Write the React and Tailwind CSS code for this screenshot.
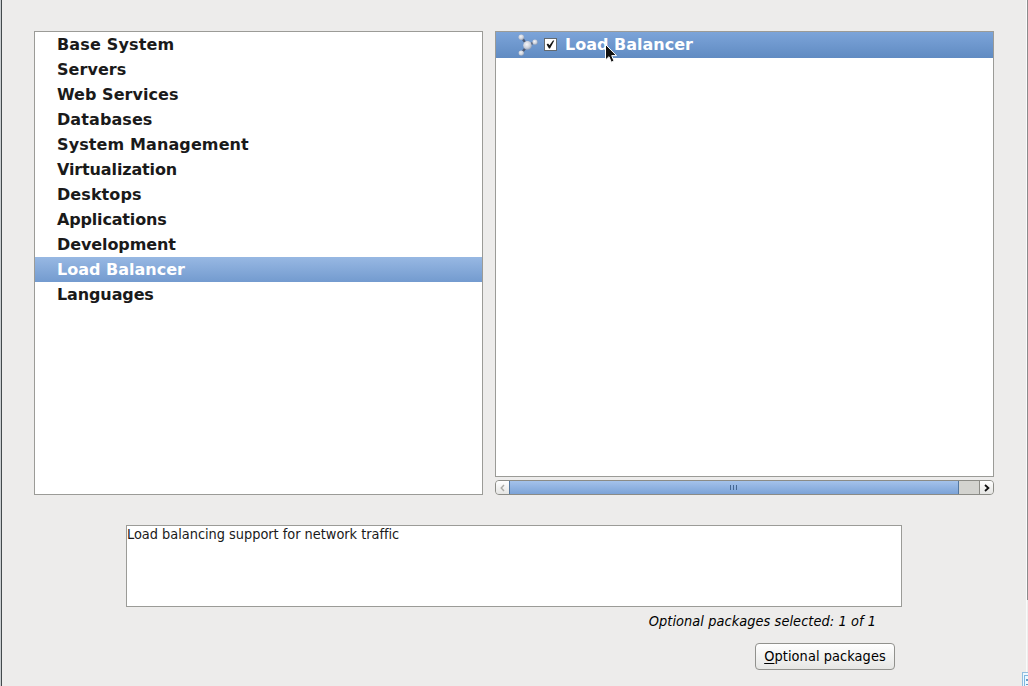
const categories = [
  ["Base System", "tracking-[0.17px]"],
  ["Servers", "tracking-[0.05px]"],
  ["Web Services", "tracking-[0.04px]"],
  ["Databases", "tracking-[0.09px]"],
  ["System Management", "tracking-[0.11px]"],
  ["Virtualization", "tracking-[-0.13px]"],
  ["Desktops", "tracking-[0.08px]"],
  ["Applications", "tracking-[-0.17px]"],
  ["Development", "tracking-[-0.1px]"],
  ["Load Balancer", "tracking-normal"],
  ["Languages", "tracking-[-0.12px]"],
];

function Category({ name, tracking, selected }) {
  return (
    <li className={`h-[25px] pl-[22px] text-[16px] leading-[25px] font-bold whitespace-nowrap ${tracking} ${selected ? "bg-linear-to-b from-[#98b8e3] to-[#739bcf] text-white" : "text-[#1a1a1a]"}`}>
      {name}
    </li>
  );
}

function PackageIcon() {
  return (
    <svg width="20" height="22" viewBox="0 0 20 22" className="shrink-0">
      <defs>
        <radialGradient id="ball" cx="42%" cy="38%" r="65%">
          <stop offset="0" stopColor="#f4f5f8" />
          <stop offset="0.6" stopColor="#cdd2dc" />
          <stop offset="1" stopColor="#939fb4" />
        </radialGradient>
      </defs>
      <path d="M3.3 3L9.5 11.5L3.3 19.3M9.5 11.5L17 8" stroke="#4d5b75" strokeWidth="2.2" fill="none" />
      <circle cx="9.5" cy="11.4" r="4.3" fill="url(#ball)" />
      <circle cx="3.3" cy="3.2" r="2.8" fill="url(#ball)" />
      <circle cx="17" cy="8.2" r="2.6" fill="url(#ball)" />
      <circle cx="3.3" cy="19.1" r="2.7" fill="url(#ball)" />
    </svg>
  );
}

function ScrollBar() {
  return (
    <div className="mt-[3px] flex h-[15px] overflow-hidden rounded-[4px] border border-[#8b8b86] bg-[#d3d3cf]">
      <div className="flex w-[13px] items-center justify-center bg-linear-to-b from-white to-[#e5e5e3]">
        <svg width="5" height="8" viewBox="0 0 5 8"><path d="M4 1L1.2 4L4 7" fill="none" stroke="#aaa9a5" strokeWidth="1.4" /></svg>
      </div>
      <div className="-my-px flex w-[450px] items-center justify-center gap-[2px] border border-[#54779f] bg-linear-to-b from-[#a4c2eb] to-[#7ca3d7] pr-[2px]">
        <i className="h-[5px] w-px bg-[#456792]" />
        <i className="h-[5px] w-px bg-[#456792]" />
        <i className="h-[5px] w-px bg-[#456792]" />
      </div>
      <div className="w-5" />
      <div className="flex flex-1 items-center justify-center border-l border-[#8b8b86] bg-linear-to-b from-white to-[#e5e5e3]">
        <svg width="6" height="8" viewBox="0 0 6 8"><path d="M1 1L4.4 4L1 7" fill="none" stroke="#111" strokeWidth="1.8" /></svg>
      </div>
    </div>
  );
}

export default function App() {
  return (
    <div className="relative flex h-[686px] w-[1028px] overflow-hidden bg-[#edeceb] font-['DejaVu_Sans',sans-serif] text-[#1a1a1a]">
      <div className="w-px bg-[#c9cdd0]" />
      <div className="w-px bg-[#444a4d]" />
      <main className="flex w-[1024px] flex-col pt-[31px] pl-8">
        <div className="flex h-[464px] gap-3">
          <ul className="w-[449px] border border-[#9b9b97] bg-white">
            {categories.map(([name, tracking]) => <Category key={name} name={name} tracking={tracking} selected={name === "Load Balancer"} />)}
          </ul>
          <section className="w-[499px]">
            <div className="h-[446px] border border-[#9b9b97] bg-white">
              <div className="flex h-[26px] items-center bg-linear-to-b from-[#7ca4d9] to-[#608bc2] pl-[22px] text-white">
                <PackageIcon />
                <span className="-mt-px ml-[6px] flex h-[13px] w-[13px] items-center justify-center border border-[#636a70] bg-white">
                  <svg width="9" height="9" viewBox="0 0 9 9"><path d="M0.6 4.6L2 3.5L3.5 5.3L7 0.5L8.3 0.6L4 8.5H3Z" fill="#111" /></svg>
                </span>
                <span className="ml-2 h-[25px] self-start text-[16px] leading-[25px] font-bold">Load Balancer</span>
              </div>
            </div>
            <ScrollBar />
          </section>
        </div>
        <div className="mt-[30px] ml-[92px] flex w-[776px] flex-col">
          <div className="h-[82px] border border-[#9b9b97] bg-white text-[13.33px] leading-[17px]">
            <span className="font-['DejaVu_Sans_Condensed','DejaVu_Sans',sans-serif] text-[14.4px] tracking-[-0.015px] whitespace-nowrap [font-stretch:condensed]">Load balancing support for network traffic</span>
          </div>
          <p className="mt-1 mr-[26px] self-end font-['DejaVu_Sans_Condensed','DejaVu_Sans',sans-serif] text-[14.4px] leading-5 tracking-[0.07px] whitespace-nowrap text-black italic [font-stretch:condensed]">Optional packages selected: 1 of 1</p>
          <button className="mt-3 mr-[7px] flex h-[27px] w-[140px] items-center justify-center self-end rounded-[4px] border border-[#91918d] bg-linear-to-b from-white to-[#e6e6e4] font-['DejaVu_Sans_Condensed','DejaVu_Sans',sans-serif] text-[14.4px] tracking-[0.08px] whitespace-nowrap text-black [font-stretch:condensed]">
            <span className="underline decoration-1 underline-offset-2">O</span>ptional packages
          </button>
        </div>
      </main>
      <div className="w-px bg-[#fafafa]" />
      <div className="h-[600px] w-px bg-[#8b8b8b]" />
      <svg className="absolute top-[44px] left-[605px]" width="15" height="20" viewBox="0 0 15 20">
        <path d="M0.5 0.5V16L4 12.7L6.3 18.2L9 17L6.7 11.6H11.5Z" fill="#111" stroke="#fff" strokeWidth="1" />
      </svg>
      <svg className="absolute right-0 bottom-0" width="6" height="14" viewBox="0 0 6 14">
        <path d="M0 0H6V14H0Z" fill="#91bedf" />
        <path d="M1 1H6V14H1Z" fill="#edf8ff" />
        <path d="M2 3H6V4H3V14H2Z" fill="#80b8e1" />
        <path d="M4 7H6V9H4ZM4 12H6V13H4Z" fill="#629bc8" />
      </svg>
    </div>
  );
}
